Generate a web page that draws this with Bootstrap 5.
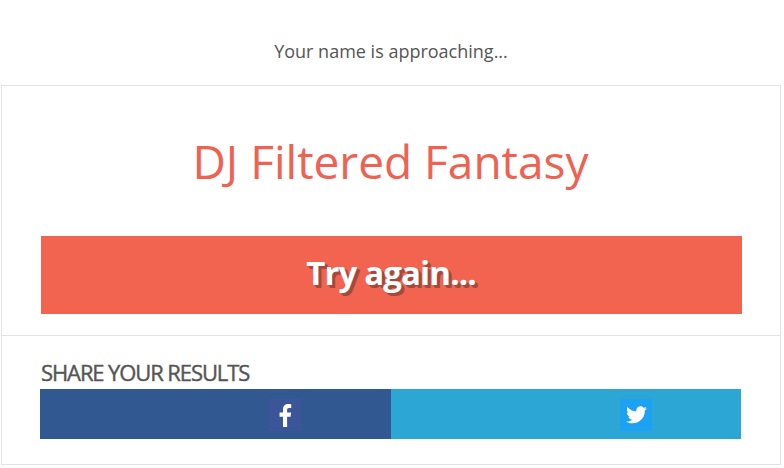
<!DOCTYPE html>
<html lang="en">
<head>
<meta charset="utf-8">
<title>DJ Name</title>
<link href="https://cdn.jsdelivr.net/npm/bootstrap@5.3.0/dist/css/bootstrap.min.css" rel="stylesheet">
<style>
html, body { background: #fff; }
body { font-family: "Open Sans", "Liberation Sans", sans-serif; color: #555; overflow: hidden; }
.page-wrap { width: 781px; padding-top: 39px; }
.intro { font-size: 18px; line-height: 25px; height: 46px; margin: 0; color: #555; padding-left: 1px; }
.result-box { margin-left: 1px; border: 1px solid #e3e3e3; border-radius: 0; height: 380px; width: 780px; }
.result-top { height: 249px; padding: 45px 38px 0 39px; }
.dj-name { font-size: 46px; line-height: 60px; color: #ef6151; font-weight: 400; margin: 0 2px 45px 0; }
.again-btn { display: block; width: 701px; height: 78px; line-height: 74px; padding: 0 1px 0 0; border: 0; border-radius: 0; background: #f26350; color: #fff; font-size: 33px; font-weight: 700; letter-spacing: -0.85px; text-shadow: 2px 2px 0 #a5493d, 3px 3px 0 #a5493d; }
.again-btn:hover { background: #f26350; color: #fff; }
.result-share { border-top: 1px solid #e3e3e3; padding: 21px 39px 0 38px; }
.share-title { font-size: 22px; line-height: 32px; height: 32px; font-weight: 400; letter-spacing: -1.1px; -webkit-text-stroke: 0.4px #555; color: #555; margin: -1px 0 1px 1px; text-transform: uppercase; }
.share-row { width: 701px; height: 50px; }
.share-cell { width: 351px; height: 50px; display: flex; align-items: center; justify-content: flex-end; border: 0; padding: 0; }
.share-fb { background: #315891; padding-right: 90px; }
.share-tw { width: 350px; background: #2ca6d4; padding-right: 89px; }
.glyph-box { width: 32px; height: 32px; margin-top: 2px; display: flex; align-items: center; justify-content: center; }
.glyph-fb { background: #3b5598; }
.glyph-tw { background: #1da1f2; }
</style>
</head>
<body>
<div class="page-wrap">
  <p class="intro text-center">Your name is approaching...</p>
  <div class="card result-box">
    <div class="result-top text-center">
      <h1 class="dj-name">DJ Filtered Fantasy</h1>
      <a href="#" class="btn again-btn">Try again...</a>
    </div>
    <div class="result-share">
      <h2 class="share-title">Share your results</h2>
      <div class="share-row d-flex">
        <a href="#" class="share-cell share-fb" aria-label="Share on Facebook">
          <span class="glyph-box glyph-fb">
            <svg width="14" height="23" viewBox="0 0 14 24"><path fill="#fff" d="M9.2 24V13.2h3.6l.6-4.3H9.2V6.200c0-1.200.4-2.100 2.100-2.100h2.200V.3C13.100.2 11.800 0 10.300 0 7.100 0 4.900 2 4.900 5.600v3.300H1.300v4.300h3.600V24z"/></svg>
          </span>
        </a>
        <a href="#" class="share-cell share-tw" aria-label="Share on Twitter">
          <span class="glyph-box glyph-tw">
            <svg width="21" height="18" viewBox="0 0 24 20"><path fill="#fff" d="M24 2.400c-.9.400-1.800.7-2.800.800 1-.6 1.800-1.600 2.200-2.700-1 .6-2 1-3.100 1.200C19.300.7 18 0 16.600 0c-2.700 0-4.900 2.200-4.900 4.900 0 .4 0 .8.100 1.100C7.700 5.800 4.100 3.900 1.700.9c-.4.700-.7 1.600-.7 2.500 0 1.700.9 3.200 2.200 4.100-.8 0-1.600-.2-2.200-.6v.1c0 2.400 1.700 4.400 3.900 4.800-.4.100-.8.200-1.300.2-.3 0-.6 0-.9-.1.6 2 2.400 3.400 4.600 3.400-1.700 1.300-3.800 2.100-6.100 2.100-.4 0-.8 0-1.200-.1C2.200 18.700 4.800 19.500 7.500 19.500c9.100 0 14-7.500 14-14v-.6c1-.7 1.800-1.600 2.500-2.500z"/></svg>
          </span>
        </a>
      </div>
    </div>
  </div>
</div>
<script src="https://cdn.jsdelivr.net/npm/bootstrap@5.3.0/dist/js/bootstrap.bundle.min.js"></script>
</body>
</html>
